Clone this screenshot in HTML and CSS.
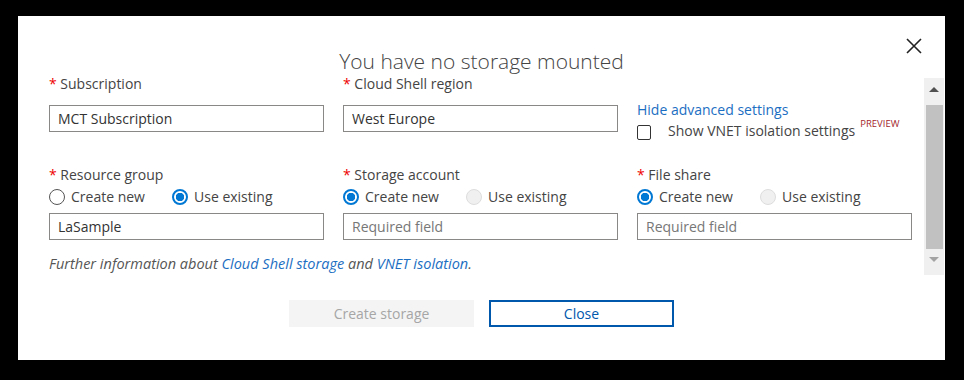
FILE: index.html
```html
<!DOCTYPE html>
<html>
<head>
  <title>Cloud Shell storage</title>
  <link rel="stylesheet" href="styles.css">
</head>
<body>
  <div class="dialog">
    <button class="close-x" aria-label="Close">
      <svg width="16" height="16" viewBox="0 0 16 16"><path d="M1 1L15 15M15 1L1 15" stroke="#222" stroke-width="1.6" fill="none"/></svg>
    </button>

    <h1 class="title">You have no storage mounted</h1>

    <div class="scroll-area">
      <div class="form-grid">
        <!-- row 1 -->
        <div class="field">
          <label class="field-label"><span class="req">*</span> Subscription</label>
          <input class="text-input" type="text" value="MCT Subscription">
        </div>
        <div class="field">
          <label class="field-label"><span class="req">*</span> Cloud Shell region</label>
          <input class="text-input" type="text" value="West Europe">
        </div>
        <div class="field advanced">
          <a class="link" href="#">Hide advanced settings</a>
          <label class="check-row">
            <span class="checkbox"></span>
            <span>Show VNET isolation settings</span>
            <sup class="preview">PREVIEW</sup>
          </label>
        </div>

        <!-- row 2 -->
        <div class="field second">
          <label class="field-label"><span class="req">*</span> Resource group</label>
          <div class="radio-row">
            <span class="radio-opt"><span class="radio"></span>Create new</span>
            <span class="radio-opt"><span class="radio checked"></span>Use existing</span>
          </div>
          <input class="text-input" type="text" value="LaSample">
        </div>
        <div class="field second">
          <label class="field-label"><span class="req">*</span> Storage account</label>
          <div class="radio-row">
            <span class="radio-opt"><span class="radio checked"></span>Create new</span>
            <span class="radio-opt"><span class="radio disabled"></span>Use existing</span>
          </div>
          <input class="text-input" type="text" placeholder="Required field">
        </div>
        <div class="field second">
          <label class="field-label"><span class="req">*</span> File share</label>
          <div class="radio-row">
            <span class="radio-opt"><span class="radio checked"></span>Create new</span>
            <span class="radio-opt"><span class="radio disabled"></span>Use existing</span>
          </div>
          <input class="text-input" type="text" placeholder="Required field">
        </div>
      </div>

      <p class="info">Further information about <a class="link" href="#">Cloud Shell storage</a> and <a class="link" href="#">VNET isolation</a>.</p>

      <div class="scrollbar">
        <span class="arrow up"></span>
        <span class="thumb"></span>
        <span class="arrow down"></span>
      </div>
    </div>

    <div class="actions">
      <button class="btn btn-disabled">Create storage</button>
      <button class="btn btn-outline">Close</button>
    </div>
  </div>
</body>
</html>
```

FILE: styles.css
```css
body {
  margin: 0;
  background: #000;
  font-family: 'Segoe UI', 'Open Sans', sans-serif;
  font-size: 14px;
  color: #444;
}
.dialog {
  position: relative;
  width: 927px;
  height: 344px;
  margin: 16px 0 0 18px;
  background: #fff;
}
.close-x {
  position: absolute;
  top: 22px;
  left: 888px;
  padding: 0;
  border: none;
  background: none;
  width: 16px;
  height: 16px;
}
.close-x svg {
  display: block;
}
.title {
  margin: 0;
  padding-top: 31px;
  text-align: center;
  font-size: 21px;
  font-weight: 300;
  line-height: 28px;
  color: #444;
}
.scroll-area {
  position: relative;
  height: 204px;
  padding-left: 31px;
}
.form-grid {
  display: grid;
  grid-template-columns: 275px 275px 275px;
  grid-template-rows: 57px auto;
  column-gap: 19px;
}
.field {
  display: flex;
  flex-direction: column;
}
.field.second {
  margin-top: 34px;
}
.field-label {
  line-height: 18px;
  margin-bottom: 12px;
}
.req {
  color: #e00;
}
.text-input {
  box-sizing: border-box;
  width: 275px;
  height: 27px;
  border: 1px solid #8a8886;
  padding: 0 8px;
  font-family: inherit;
  font-size: 14px;
  color: #333;
  outline: none;
}
.text-input::placeholder {
  color: #777;
}
.advanced {
  padding-top: 26px;
}
.link {
  color: #1b6ec2;
  text-decoration: none;
}
.advanced .link {
  line-height: 18px;
}
.check-row {
  display: flex;
  align-items: center;
  margin-top: 3px;
  line-height: 18px;
}
.checkbox {
  box-sizing: border-box;
  width: 14px;
  height: 15px;
  border: 1px solid #333;
  border-radius: 2px;
  margin-right: 17px;
  margin-top: 2px;
}
.preview {
  color: #a4262c;
  font-size: 9.5px;
  margin-left: 5px;
  align-self: flex-start;
  line-height: 10px;
  margin-top: -3px;
}
.radio-row {
  display: flex;
  margin: -8px 0 7px;
  line-height: 18px;
}
.radio-opt {
  display: flex;
  align-items: center;
  width: 123px;
}
.radio {
  box-sizing: border-box;
  width: 16px;
  height: 16px;
  border-radius: 50%;
  border: 1px solid #555;
  margin-right: 6px;
  background: #fff;
}
.radio.checked {
  border: 2px solid #0078d4;
  background: radial-gradient(circle, #0078d4 0 4px, #fff 4.5px);
}
.radio.disabled {
  border-color: #ddd;
  background: #f0f0f0;
}
.info {
  margin: 15px 0 0;
  line-height: 18px;
  font-size: 14.5px;
  font-style: italic;
  color: #555;
}
.scrollbar {
  position: absolute;
  top: 3px;
  left: 906px;
  width: 20px;
  height: 197px;
  background: #f0f0f0;
  display: flex;
  flex-direction: column;
  align-items: center;
}
.arrow {
  width: 0;
  height: 0;
  border-left: 5px solid transparent;
  border-right: 5px solid transparent;
}
.arrow.up {
  border-bottom: 5px solid #505050;
  margin: 9px 0 13px;
}
.arrow.down {
  border-top: 5px solid #a3a3a3;
  margin-top: 8px;
}
.thumb {
  width: 17px;
  height: 144px;
  background: #c1c1c1;
}
.actions {
  display: flex;
  justify-content: center;
  gap: 15px;
  margin-top: 21px;
}
.btn {
  box-sizing: border-box;
  width: 185px;
  height: 27px;
  font-family: inherit;
  font-size: 14px;
  padding: 0;
}
.btn-disabled {
  background: #f4f4f4;
  border: none;
  color: #a6a6a6;
}
.btn-outline {
  background: #fff;
  border: 2px solid #0058ad;
  color: #0058ad;
}
```
